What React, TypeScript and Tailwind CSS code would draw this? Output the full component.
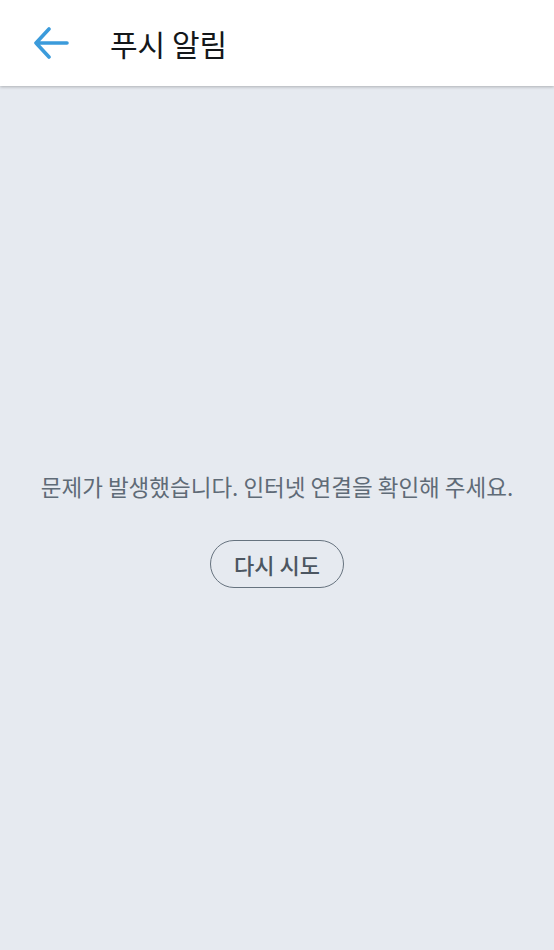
export default function App() {
  return (
    <div
      className="flex h-[950px] w-[554px] flex-col bg-[#e6eaf0]"
      style={{ fontFamily: '"Noto Sans CJK KR", "Noto Sans", sans-serif' }}
    >
      <header className="relative z-10 flex h-[86px] items-center bg-white shadow-[0_1px_3px_rgba(0,0,0,0.25)]">
        <button className="ml-[31px] flex h-10 w-10 items-center justify-center text-[#3b9bdb]">
          <svg
            xmlns="http://www.w3.org/2000/svg"
            viewBox="0 0 36 32"
            fill="none"
            stroke="currentColor"
            strokeWidth={3.6}
            strokeLinecap="round"
            strokeLinejoin="round"
            className="h-[32px] w-[36px]"
          >
            <path d="M34 16H3M16 2L3 16l13 14" />
          </svg>
        </button>
        <h1 className="ml-[39px] text-[30px] font-normal leading-none text-[#14171a]">푸시 알림</h1>
      </header>

      <main className="flex flex-1 flex-col items-center pt-[383px]">
        <p className="text-[22.5px] font-normal leading-[34px] text-[#5f6b77]">
          문제가 발생했습니다. 인터넷 연결을 확인해 주세요.
        </p>
        <button className="mt-[37px] flex h-[48px] w-[134px] items-center justify-center rounded-full border-[1.5px] border-[#66737f] text-[22px] font-medium text-[#4c5661]">
          다시 시도
        </button>
      </main>
    </div>
  );
}
